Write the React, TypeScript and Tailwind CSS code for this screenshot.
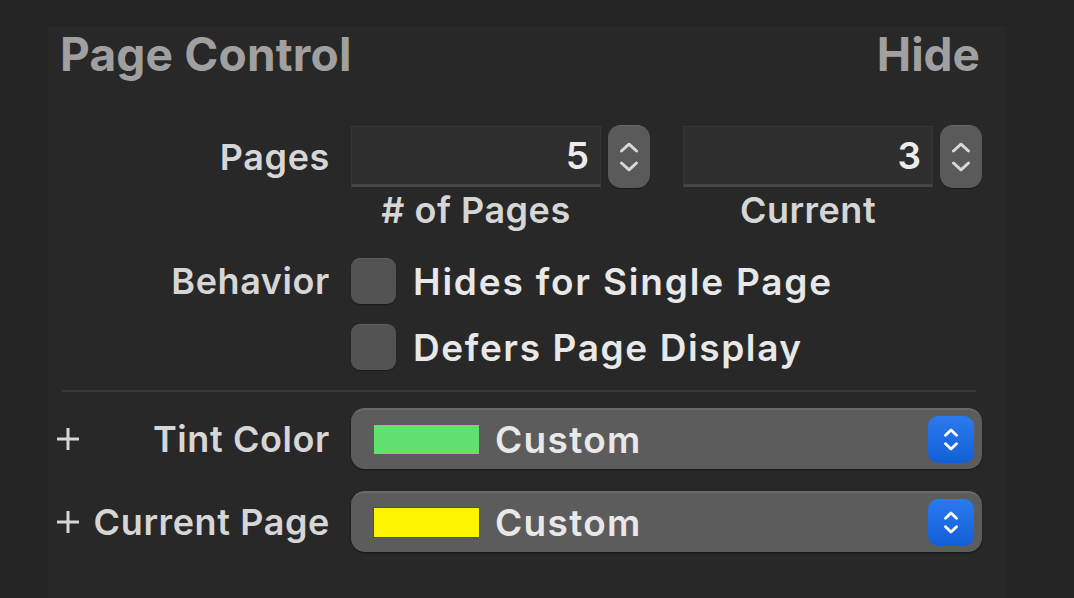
import React from "react";

function Stepper() {
  return (
    <div className="w-[42px] h-[63px] rounded-[13px] bg-[#5a5a5a] border-t border-[#666] flex flex-col items-center justify-center gap-[8px] shadow-[0_1px_1px_rgba(0,0,0,0.4)]">
      <svg width="20" height="11" viewBox="0 0 20 11" fill="none">
        <path d="M2.5 9 L10 2.2 L17.5 9" stroke="#d8d8d8" strokeWidth="3" strokeLinecap="round" strokeLinejoin="round" />
      </svg>
      <svg width="20" height="11" viewBox="0 0 20 11" fill="none">
        <path d="M2.5 2 L10 8.8 L17.5 2" stroke="#d8d8d8" strokeWidth="3" strokeLinecap="round" strokeLinejoin="round" />
      </svg>
    </div>
  );
}

function NumField({ value }: { value: string }) {
  return (
    <div className="flex-1 h-[61px] bg-[#2e2e2e] border border-[#363636] border-b-[3px] border-b-[#464646] flex items-center justify-end pr-[11px] text-[37px] text-[#ececec] font-semibold">
      {value}
    </div>
  );
}

function Checkbox() {
  return (
    <div className="w-[45px] h-[46px] rounded-[9px] bg-[#535353] border-t border-[#5e5e5e] shadow-[0_1px_1px_rgba(0,0,0,0.35)]" />
  );
}

function Plus() {
  return (
    <svg width="26" height="26" viewBox="0 0 26 26" fill="none">
      <path d="M13 2 V24 M2 13 H24" stroke="#d6d6d6" strokeWidth="3" />
    </svg>
  );
}

function Popup({ color, border }: { color: string; border: string }) {
  return (
    <div className="flex-1 h-[61px] rounded-[14px] bg-[#5c5c5c] border-t-2 border-[#6a6a6a] shadow-[0_1px_2px_rgba(0,0,0,0.5)] flex items-center pl-[22px] pr-[8px]">
      <div
        className="w-[107px] h-[31px] border"
        style={{ backgroundColor: color, borderColor: border }}
      />
      <span className="ml-[15px] text-[37px] text-[#e8e8e8] font-semibold tracking-[1.3px]">Custom</span>
      <div className="ml-auto w-[46px] h-[47px] rounded-[10px] bg-gradient-to-b from-[#2a7af0] to-[#135fd8] flex flex-col items-center justify-center gap-[5px]">
        <svg width="16" height="9" viewBox="0 0 16 9" fill="none">
          <path d="M2.5 7.2 L8 2 L13.5 7.2" stroke="#ffffff" strokeWidth="2.8" strokeLinecap="round" strokeLinejoin="round" />
        </svg>
        <svg width="16" height="9" viewBox="0 0 16 9" fill="none">
          <path d="M2.5 1.8 L8 7 L13.5 1.8" stroke="#ffffff" strokeWidth="2.8" strokeLinecap="round" strokeLinejoin="round" />
        </svg>
      </div>
    </div>
  );
}

function Row({
  label,
  plus,
  children,
  className,
}: {
  label?: string;
  plus?: boolean;
  children: React.ReactNode;
  className?: string;
}) {
  return (
    <div className={"flex items-center " + (className ?? "")}>
      <div className="w-[282px] flex items-center pl-[7px]">
        {plus && <Plus />}
        <span className="ml-auto text-[36px] text-[#d6d6d6] font-semibold tracking-[0.6px] whitespace-nowrap">{label}</span>
      </div>
      <div className="flex-1 ml-[21px] pr-[25px] flex items-center">{children}</div>
    </div>
  );
}

export default function App() {
  return (
    <div className="w-[1074px] h-[598px] bg-[#242424] overflow-hidden font-['Inter','Noto_Sans',sans-serif] leading-none">
      <div className="ml-[48px] mt-[27px] w-[959px] h-[571px] bg-[#282828] flex flex-col">
        <div className="h-[54px] flex items-center justify-between pl-[12px] pr-[27px]">
          <span className="text-[46px] font-bold text-[#a0a0a0] tracking-[0.2px]">Page Control</span>
          <span className="text-[46px] font-bold text-[#a0a0a0]">Hide</span>
        </div>

        <Row label="Pages" className="mt-[44px] h-[63px]">
          <div className="flex-1 flex items-center gap-[7px]">
            <NumField value="5" />
            <Stepper />
          </div>
          <div className="flex-1 flex items-center gap-[7px] ml-[33px]">
            <NumField value="3" />
            <Stepper />
          </div>
        </Row>

        <Row className="mt-[4px] h-[36px]">
          <div className="flex-1 flex items-center gap-[7px]">
            <div className="flex-1 text-center text-[36px] text-[#d6d6d6] font-semibold tracking-[0.5px] whitespace-nowrap"># of Pages</div>
            <div className="w-[42px]" />
          </div>
          <div className="flex-1 flex items-center gap-[7px] ml-[33px]">
            <div className="flex-1 text-center text-[36px] text-[#d6d6d6] font-semibold tracking-[0.5px]">Current</div>
            <div className="w-[42px]" />
          </div>
        </Row>

        <Row label="Behavior" className="mt-[30px] h-[46px]">
          <Checkbox />
          <span className="ml-[17px] text-[37px] text-[#e8e8e8] font-semibold tracking-[1.8px] whitespace-nowrap">Hides for Single Page</span>
        </Row>

        <Row className="mt-[20px] h-[46px]">
          <Checkbox />
          <span className="ml-[17px] text-[37px] text-[#e8e8e8] font-semibold tracking-[1.6px] whitespace-nowrap">Defers Page Display</span>
        </Row>

        <div className="mt-[20px] ml-[14px] mr-[31px] h-[2px] bg-[#3a3a3a]" />

        <Row label="Tint Color" plus className="mt-[16px] h-[61px]">
          <Popup color="#62e070" border="#6b4f78" />
        </Row>

        <Row label="Current Page" plus className="mt-[22px] h-[61px]">
          <Popup color="#fef400" border="#4a4a8a" />
        </Row>
      </div>
    </div>
  );
}
